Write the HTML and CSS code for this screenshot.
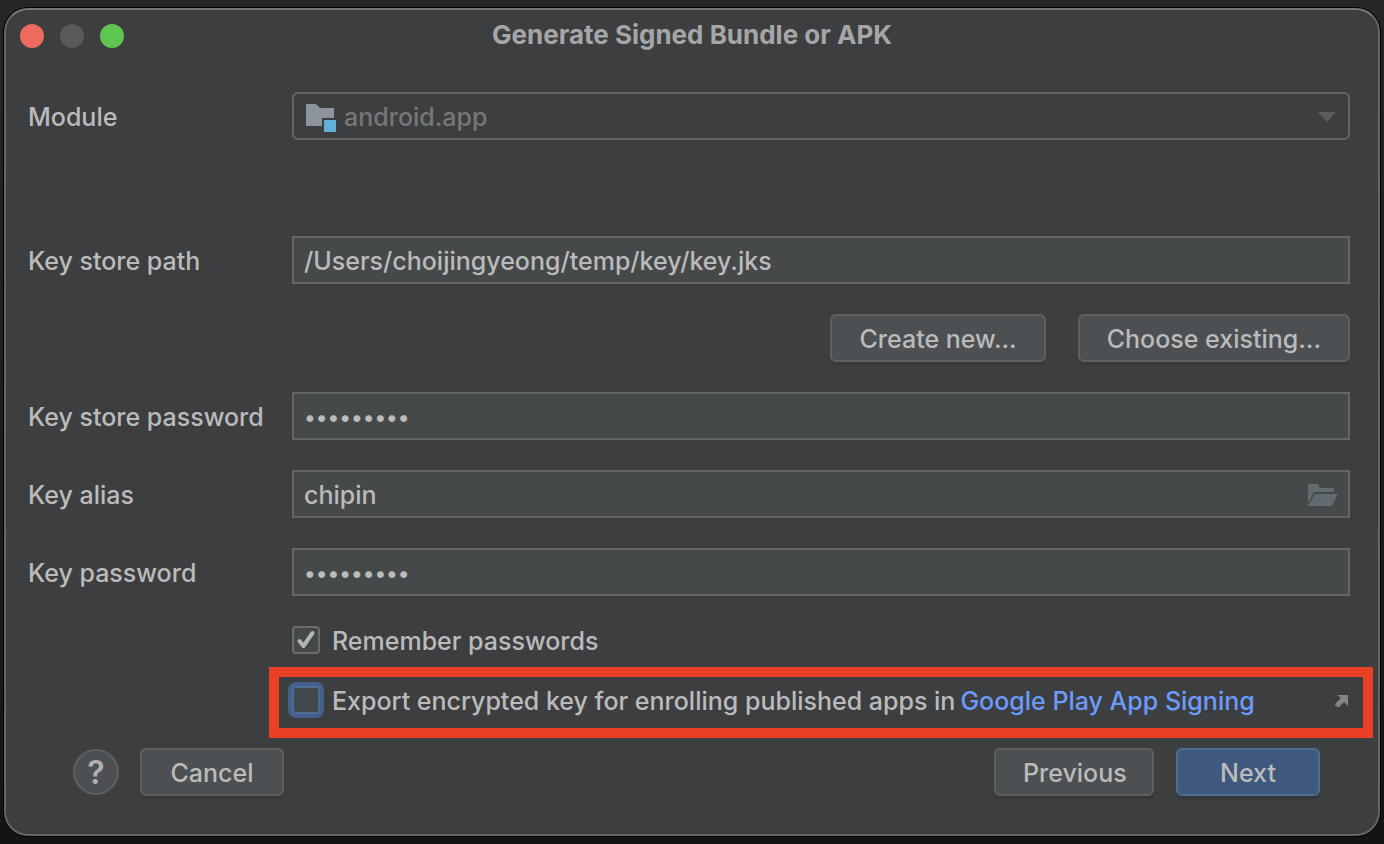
FILE: index.html
```
<!DOCTYPE html>
<html lang="en">
<head>
    <meta charset="UTF-8">
    <meta name="viewport" content="width=device-width, initial-scale=1.0">
    <title>Generate Signed Bundle or APK</title>
    <link rel="stylesheet" href="styles.css">
</head>
<body>
    <main class="dialog">
        <header class="titlebar">
            <div class="window-buttons">
                <button type="button" class="dot close" aria-label="Close"></button>
                <button type="button" class="dot minimize" aria-label="Minimize" disabled></button>
                <button type="button" class="dot maximize" aria-label="Maximize"></button>
            </div>
            <h1>Generate Signed Bundle or APK</h1>
        </header>
        <form onsubmit="return false;">
            <div class="fields">
                <label for="module">Module</label>
                <div class="control module-row">
                    <select id="module" disabled>
                        <option>android.app</option>
                    </select>
                    <svg class="module-icon" width="32" height="28" viewBox="0 0 32 28">
                        <path d="M0 0H9Q11 0 12 2L14 4H28V14H16V22H0Z" fill="#8c959e"/>
                        <rect x="18" y="16" width="12" height="12" fill="#62b1dc"/>
                    </svg>
                    <svg class="arrow-icon" width="18" height="10" viewBox="0 0 18 10">
                        <path d="M0 0H18L9 10Z" fill="#5b5c5d"/>
                    </svg>
                </div>

                <label for="storePath">Key store path</label>
                <input type="text" id="storePath" value="/Users/choijingyeong/temp/key/key.jks">

                <div class="path-buttons">
                    <button type="button" class="btn">Create new...</button>
                    <button type="button" class="btn">Choose existing...</button>
                </div>

                <label for="storePassword">Key store password</label>
                <input type="password" id="storePassword" value="keystore1">

                <label for="alias">Key alias</label>
                <div class="control">
                    <input type="text" id="alias" value="chipin">
                    <button type="button" class="browse" aria-label="Browse aliases">
                        <svg width="30" height="22" viewBox="0 0 30 22">
                            <path d="M0 0H10L12 4H26V8H6L0 19Z" fill="#616b70"/>
                            <path d="M7 10H30L24 22H0Z" fill="#616b70"/>
                        </svg>
                    </button>
                </div>

                <label for="keyPassword">Key password</label>
                <input type="password" id="keyPassword" value="keypass12">
            </div>

            <div class="check-row">
                <input type="checkbox" id="remember" checked>
                <label for="remember">Remember passwords</label>
            </div>
            <div class="check-row highlight">
                <input type="checkbox" id="exportKey" class="focused">
                <label for="exportKey">Export encrypted key for enrolling published apps in</label>
                <a href="#">Google Play App Signing</a>
                <svg class="external" width="14" height="14" viewBox="0 0 14 14">
                    <path d="M2 2H13V13L9 9L4 14H2L0 12V11L6 5Z" fill="#7f8588"/>
                </svg>
            </div>

            <footer class="actions">
                <button type="button" class="help" aria-label="Help">?</button>
                <button type="button" class="btn cancel">Cancel</button>
                <button type="button" class="btn previous">Previous</button>
                <button type="submit" class="btn primary">Next</button>
            </footer>
        </form>
    </main>
</body>
</html>
```
FILE: styles.css
```
* {
    box-sizing: border-box;
}
body {
    margin: 0;
    padding: 8px 4px;
    min-height: 100vh;
    display: flex;
    background: linear-gradient(#262626, #141414);
    color: #bbbbbb;
    font-family: Inter, "Liberation Sans", sans-serif;
    font-size: 25px;
    font-weight: 450;
    line-height: 32px;
}
button,
input,
select {
    font: inherit;
    color: inherit;
    margin: 0;
}
.dialog {
    flex: 1;
    background-color: #3d3e40;
    border: 2px solid #646566;
    border-top-color: #777777;
    border-radius: 24px;
    box-shadow: 0 0 0 1px #000;
}
.titlebar {
    display: grid;
    grid-template-columns: 1fr auto 1fr;
    align-items: center;
    height: 52px;
    padding: 0 14px;
}
.window-buttons {
    display: flex;
    gap: 16px;
}
.dot {
    width: 24px;
    height: 24px;
    padding: 0;
    border: none;
    border-radius: 50%;
}
.close {
    background-color: #ed6a5e;
}
.minimize {
    background-color: #58595b;
}
.maximize {
    background-color: #61c554;
}
h1 {
    margin: 0;
    padding-bottom: 2px;
    font-size: 26px;
    font-weight: 750;
    color: #a5a6a7;
}
.fields {
    display: grid;
    grid-template-columns: 264px 1fr;
    align-items: center;
    row-gap: 30px;
    padding: 30px 28px 0 22px;
}
label {
    padding-top: 2px;
}
.control {
    position: relative;
}
.module-row,
label[for="module"] {
    margin-bottom: 66px;
}
input[type="text"],
input[type="password"],
select {
    display: block;
    width: 100%;
    height: 48px;
    padding: 2px 10px 0;
    background-color: #45494a;
    border: 2px solid #646566;
    border-radius: 0;
    outline: none;
}
input[type="password"] {
    font-size: 22px;
}
select {
    appearance: none;
    padding-left: 50px;
    background-color: transparent;
    border-radius: 6px;
    color: #777777;
    opacity: 1;
}
.module-icon {
    position: absolute;
    left: 14px;
    top: 12px;
}
.arrow-icon {
    position: absolute;
    right: 14px;
    top: 20px;
}
.browse {
    position: absolute;
    right: 12px;
    top: 14px;
    display: flex;
    padding: 0;
    background: none;
    border: none;
}
.path-buttons {
    grid-column: 2;
    display: flex;
    justify-content: flex-end;
    gap: 32px;
}
.btn {
    height: 48px;
    padding: 2px 27px 0;
    background-color: #4c5052;
    border: 2px solid #5e6060;
    border-radius: 6px;
    box-shadow: 0 3px 0 #37383a;
}
.primary {
    width: 144px;
    background-color: #3e587e;
    border-color: #4c708c;
}
.check-row {
    display: flex;
    align-items: center;
    height: 28px;
    margin: 30px 28px 0 286px;
}
.check-row label {
    margin-left: 12px;
}
input[type="checkbox"] {
    appearance: none;
    flex: none;
    width: 28px;
    height: 28px;
    background-color: #43494a;
    border: 2px solid #6b6b6b;
    border-radius: 4px;
    outline: none;
}
input[type="checkbox"]:checked {
    background-image: url("data:image/svg+xml,%3Csvg xmlns='http://www.w3.org/2000/svg' viewBox='0 0 24 24'%3E%3Cpath d='M5.500 13L9.500 18L18.500 5' fill='none' stroke='%23b4b4b4' stroke-width='4' stroke-linecap='round' stroke-linejoin='round'/%3E%3C/svg%3E");
}
input.focused {
    border-color: #4a6c95;
    box-shadow: 0 0 0 4px #45618b;
}
.highlight {
    height: 71px;
    margin: 13px 5px 0 263px;
    padding: 0 14px 5px 13px;
    border: 10px solid #ea4025;
}
a {
    margin-left: 5px;
    padding-top: 2px;
    color: #6b9bfa;
    text-decoration: none;
}
.external {
    margin-left: auto;
}
.actions {
    display: flex;
    align-items: center;
    padding: 10px 58px 0 67px;
}
.help {
    width: 46px;
    height: 46px;
    padding: 2px 0 0;
    background-color: #4c5052;
    border: 2px solid #5e6060;
    border-radius: 50%;
    font-size: 32px;
    font-weight: 600;
    color: #afb1b3;
}
.cancel {
    width: 144px;
    margin-left: 21px;
}
.previous {
    width: 160px;
    margin-left: auto;
    margin-right: 22px;
}
```
